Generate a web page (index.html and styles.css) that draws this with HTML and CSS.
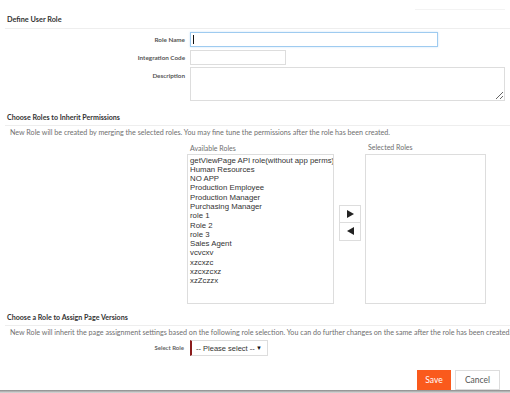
FILE: index.html
```html
<!DOCTYPE html>
<html lang="en">
<head>
    <meta charset="UTF-8">
    <meta name="viewport" content="width=device-width, initial-scale=1.0">
    <title>Define User Role</title>
    <link rel="stylesheet" href="styles.css">
</head>
<body>
    <div class="page">
        <div class="top-strip">
            <div class="top-line"></div>
        </div>

        <h2 class="section-title first">Define User Role</h2>

        <div class="form-rows">
            <div class="row">
                <label class="row-label" for="roleName">Role Name</label>
                <div class="field-wrap">
                    <input type="text" id="roleName" class="input input-name focused">
                    <span class="caret"></span>
                </div>
            </div>
            <div class="row">
                <label class="row-label" for="integrationCode">Integration Code</label>
                <input type="text" id="integrationCode" class="input input-code">
            </div>
            <div class="row">
                <label class="row-label" for="description">Description</label>
                <textarea id="description" class="input input-desc"></textarea>
            </div>
        </div>

        <h2 class="section-title">Choose Roles to Inherit Permissions</h2>
        <p class="section-note">New Role will be created by merging the selected roles. You may fine tune the permissions after the role has been created.</p>

        <div class="transfer">
            <div class="role-col">
                <div class="role-col-label">Available Roles</div>
                <div class="listbox listbox-available">
                    <div class="list-item">getViewPage API role(without app perms)</div>
                    <div class="list-item">Human Resources</div>
                    <div class="list-item">NO APP</div>
                    <div class="list-item">Production Employee</div>
                    <div class="list-item">Production Manager</div>
                    <div class="list-item">Purchasing Manager</div>
                    <div class="list-item">role 1</div>
                    <div class="list-item">Role 2</div>
                    <div class="list-item">role 3</div>
                    <div class="list-item">Sales Agent</div>
                    <div class="list-item">vcvcxv</div>
                    <div class="list-item">xzcxzc</div>
                    <div class="list-item">xzcxzcxz</div>
                    <div class="list-item">xzZczzx</div>
                </div>
            </div>

            <div class="arrow-col">
                <button class="arrow-btn" title="Add">
                    <svg width="7" height="8" viewBox="0 0 7 8"><polygon points="0,0 7,4 0,8" fill="#222"/></svg>
                </button>
                <button class="arrow-btn" title="Remove">
                    <svg width="7" height="8" viewBox="0 0 7 8"><polygon points="7,0 0,4 7,8" fill="#222"/></svg>
                </button>
            </div>

            <div class="role-col">
                <div class="role-col-label">Selected Roles</div>
                <div class="listbox listbox-selected"></div>
            </div>
        </div>

        <h2 class="section-title third">Choose a Role to Assign Page Versions</h2>
        <p class="section-note">New Role will inherit the page assignment settings based on the following role selection. You can do further changes on the same after the role has been created.</p>

        <div class="row select-row">
            <label class="row-label small">Select Role</label>
            <div class="fake-select">
                <span>-- Please select --</span>
                <span class="select-arrow">&#9660;</span>
            </div>
        </div>

        <div class="footer">
            <button class="btn btn-save">Save</button>
            <button class="btn btn-cancel">Cancel</button>
        </div>
        <div class="bottom-edge"></div>
    </div>
</body>
</html>
```

FILE: styles.css
```css
:root {
    --text-dark: #333333;
    --text-label: #555555;
    --text-muted: #6f6f6f;
    --border-light: #dddddd;
    --divider: #eeeeee;
    --focus-border: #9ecbf0;
    --accent: #fa5a1c;
    --select-mark: #8b1c1c;
}

body {
    margin: 0;
    font-family: Lato, "Open Sans", sans-serif;
    background-color: #ffffff;
    color: var(--text-dark);
    overflow: hidden;
}

.page {
    display: flex;
    flex-direction: column;
    height: 393px;
}

.top-strip {
    height: 13px;
    display: flex;
    justify-content: flex-end;
}

.top-line {
    width: 90px;
    height: 9px;
    margin-right: 5px;
    border-bottom: 1px solid #f3f3f3;
}

.section-title {
    margin: 0 0 0 5px;
    padding: 2px 2px 2px;
    font-size: 7.1px;
    line-height: 10px;
    font-weight: bold;
    color: var(--text-dark);
    border-bottom: 1px solid var(--divider);
}

.section-title.first {
    font-size: 7.3px;
    padding-bottom: 3px;
}

.section-title.third {
    margin-top: 7px;
}

.section-note {
    margin: 1px 0 0;
    padding-left: 10px;
    font-size: 7.15px;
    line-height: 12px;
    color: var(--text-muted);
    white-space: nowrap;
}

.form-rows {
    display: flex;
    flex-direction: column;
    gap: 3px;
    padding-top: 3px;
    margin-bottom: 10px;
}

.row {
    display: flex;
    align-items: flex-start;
}

.row-label {
    width: 185px;
    margin-right: 5px;
    text-align: right;
    font-size: 6.3px;
    font-weight: bold;
    line-height: 15px;
    color: var(--text-label);
}

.row-label.small {
    font-size: 6px;
    line-height: 16px;
    width: 184px;
    margin-right: 6px;
    color: #666666;
}

.field-wrap {
    position: relative;
}

.input {
    box-sizing: border-box;
    margin: 0;
    padding: 0 3px;
    border: 1px solid var(--border-light);
    background-color: #ffffff;
    font-family: "Liberation Sans", Arial, sans-serif;
    font-size: 8px;
    outline: none;
}

.input-name {
    display: block;
    width: 248px;
    height: 15px;
}

.input-name.focused {
    border-color: var(--focus-border);
    box-shadow: 0 0 2px rgba(102, 175, 233, 0.35);
}

.caret {
    position: absolute;
    left: 3px;
    top: 3px;
    width: 1px;
    height: 9px;
    background-color: #111111;
}

.input-code {
    width: 96px;
    height: 15px;
}

.input-desc {
    width: 315px;
    height: 34px;
    margin-top: -1px;
    resize: vertical;
}

.transfer {
    display: flex;
    align-items: center;
    padding-left: 187px;
    margin-top: 4px;
}

.role-col {
    display: flex;
    flex-direction: column;
}

.role-col-label {
    padding-left: 3px;
    margin-bottom: 1px;
    font-size: 7px;
    line-height: 9px;
    color: var(--text-muted);
}

.listbox {
    box-sizing: border-box;
    height: 150px;
    padding: 1px 2px;
    border: 1px solid var(--border-light);
    overflow: hidden;
}

.listbox-available {
    width: 147px;
}

.listbox-selected {
    width: 121px;
    margin-top: 1px;
}

.list-item {
    font-family: "Liberation Sans", Arial, sans-serif;
    font-size: 7.8px;
    line-height: 9.3px;
    color: #333333;
    white-space: nowrap;
}

.arrow-col {
    display: flex;
    flex-direction: column;
    margin: 0 4px 0 5px;
    padding-bottom: 2px;
}

.arrow-btn {
    box-sizing: border-box;
    width: 22px;
    height: 18px;
    padding: 0;
    border: 1px solid var(--border-light);
    background-color: #ffffff;
    display: flex;
    align-items: center;
    justify-content: center;
    cursor: pointer;
}

.arrow-btn + .arrow-btn {
    border-top: none;
}

.select-row {
    margin-top: 1px;
}

.fake-select {
    box-sizing: border-box;
    width: 78px;
    height: 16px;
    display: flex;
    align-items: center;
    justify-content: space-between;
    padding: 0 5px 0 4px;
    border: 1px solid var(--border-light);
    border-left: 2px solid var(--select-mark);
    font-family: "Liberation Sans", Arial, sans-serif;
    font-size: 7.5px;
    color: #333333;
}

.select-arrow {
    font-size: 6px;
    color: #111111;
}

.footer {
    margin-top: auto;
    display: flex;
    justify-content: flex-end;
    gap: 4px;
    padding-right: 10px;
}

.btn {
    height: 20px;
    padding: 0;
    font-family: Lato, "Open Sans", sans-serif;
    font-size: 8.5px;
    cursor: pointer;
}

.btn-save {
    width: 34px;
    border: none;
    background-color: var(--accent);
    color: #ffffff;
}

.btn-cancel {
    width: 45px;
    border: 1px solid var(--border-light);
    background-color: #ffffff;
    color: #555555;
}

.bottom-edge {
    height: 3px;
    background: linear-gradient(#8a8a8a, #dcdcdc);
}
```
